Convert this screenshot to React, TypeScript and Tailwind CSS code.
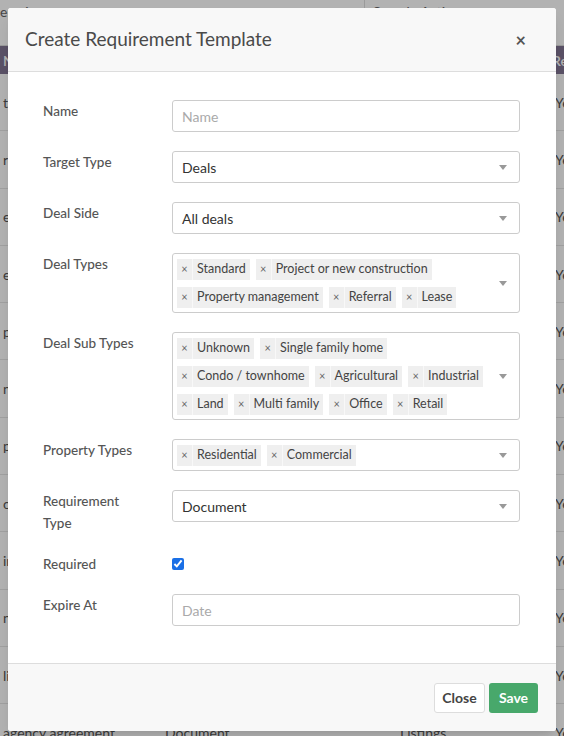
const font = "font-['Lato','Noto_Sans',sans-serif]";

const bgRows = [
  "tax form",
  "referral agreement",
  "escrow receipt",
  "electric disclosure",
  "purchase contract",
  "notice of sale",
  "purchase addendum",
  "offer letter",
  "inspection",
  "notice of termination",
  "listing agreement",
  "agency agreement",
];

function Arrow() {
  return (
    <span className="absolute right-[12px] top-1/2 -mt-[2px] h-0 w-0 border-x-[4px] border-t-[5px] border-x-transparent border-t-[#999]" />
  );
}

function Tag({ label }: { label: string }) {
  return (
    <span className="flex h-[21px] items-stretch whitespace-nowrap bg-[#efefef] text-[12.5px] text-[#444]">
      <span className="flex w-[16px] items-center justify-center border-r border-[#f8f8f8] text-[11px] text-[#666]">
        ×
      </span>
      <span className="flex items-center px-[4px]">{label}</span>
    </span>
  );
}

function TagSelect({ rows }: { rows: string[][] }) {
  return (
    <div className="relative flex flex-col gap-[7px] rounded-[3px] border border-[#ccc] pb-1 pl-[4px] pr-8 pt-[5px]">
      {rows.map((row, i) => (
        <div key={i} className="flex gap-[6px]">
          {row.map((t) => (
            <Tag key={t} label={t} />
          ))}
        </div>
      ))}
      <Arrow />
    </div>
  );
}

function Select({ value }: { value: string }) {
  return (
    <div className="relative flex h-8 items-center rounded-[3px] border border-[#ccc] pl-[9px] text-[14px] text-[#333]">
      {value}
      <Arrow />
    </div>
  );
}

function TextInput({ placeholder }: { placeholder: string }) {
  return (
    <input
      readOnly
      placeholder={placeholder}
      className="h-8 w-full rounded-[3px] border border-[#ccc] px-[9px] text-[14px] text-[#333] outline-none placeholder:text-[#aaa]"
    />
  );
}

function Field({ label, children }: { label: React.ReactNode; children: React.ReactNode }) {
  return (
    <div className="flex items-start">
      <div className="w-[129px] shrink-0 pr-3 text-[13.5px] font-medium leading-[22px] text-[#555]">{label}</div>
      <div className="min-w-0 flex-1">{children}</div>
    </div>
  );
}

export default function App() {
  return (
    <div className={`relative h-[736px] w-full overflow-hidden bg-white ${font}`}>
      {/* Page behind the modal */}
      <div className="flex h-[46px] border-b border-[#ddd]">
        <div className="w-[365px] shrink-0 border-r border-[#ddd] pt-[1px] text-[14px] text-[#666]">entries</div>
        <div className="flex-1 pl-2 pt-[1px] text-[14px] text-[#666]">Search, Actions</div>
      </div>
      <div className="flex h-[28px] items-center whitespace-nowrap bg-[#817592] text-[14px] font-semibold text-white">
        <span className="w-[165px] shrink-0 pl-[3px]">Name</span>
        <span className="w-[235px] shrink-0">Type</span>
        <span className="w-[152px] shrink-0">Target</span>
        <span className="shrink-0">Required</span>
      </div>
      {bgRows.map((r) => (
        <div
          key={r}
          className="flex h-[57.3px] items-center whitespace-nowrap border-b border-[#e5e5e5] text-[14px] text-[#555]"
        >
          <span className="w-[165px] shrink-0 pl-[3px]">{r}</span>
          <span className="w-[235px] shrink-0">Document</span>
          <span className="w-[155px] shrink-0">Listings</span>
          <span className="shrink-0">Yes</span>
        </div>
      ))}

      {/* Overlay */}
      <div className="absolute inset-0 bg-black/30">
        <div className="mx-2 mt-2 overflow-hidden rounded-[3px] bg-white shadow-lg">
          <div className="flex h-16 items-center justify-between border-b border-[#ddd] bg-[#f8f8f8] pl-[17px] pr-[30px]">
            <h1 className="text-[19px] text-[#4a4a4a]">Create Requirement Template</h1>
            <span className="text-[18px] font-bold leading-none text-[#555]">×</span>
          </div>

          <div className="flex flex-col gap-[19px] pb-[37px] pl-[35px] pr-[36px] pt-7">
            <Field label="Name">
              <TextInput placeholder="Name" />
            </Field>
            <Field label="Target Type">
              <Select value="Deals" />
            </Field>
            <Field label="Deal Side">
              <Select value="All deals" />
            </Field>
            <Field label="Deal Types">
              <TagSelect
                rows={[
                  ["Standard", "Project or new construction"],
                  ["Property management", "Referral", "Lease"],
                ]}
              />
            </Field>
            <Field label="Deal Sub Types">
              <TagSelect
                rows={[
                  ["Unknown", "Single family home"],
                  ["Condo / townhome", "Agricultural", "Industrial"],
                  ["Land", "Multi family", "Office", "Retail"],
                ]}
              />
            </Field>
            <Field label="Property Types">
              <TagSelect rows={[["Residential", "Commercial"]]} />
            </Field>
            <Field label={<>Requirement<br />Type</>}>
              <Select value="Document" />
            </Field>
            <Field label="Required">
              <div className="flex h-[22px] items-center">
                <input type="checkbox" defaultChecked className="m-0 h-[12px] w-[12px] accent-[#1a6fe6]" />
              </div>
            </Field>
            <Field label="Expire At">
              <TextInput placeholder="Date" />
            </Field>
          </div>

          <div className="flex h-[68px] items-center justify-end gap-1 border-t border-[#ddd] bg-[#f8f8f8] pr-[18px]">
            <button className="h-[30px] w-[51px] rounded-[3px] border border-[#ddd] bg-white text-[14px] font-bold text-[#444]">
              Close
            </button>
            <button className="h-[30px] w-[49px] rounded-[3px] bg-[#48a86b] text-[14px] font-bold text-white">
              Save
            </button>
          </div>
        </div>
      </div>
    </div>
  );
}
